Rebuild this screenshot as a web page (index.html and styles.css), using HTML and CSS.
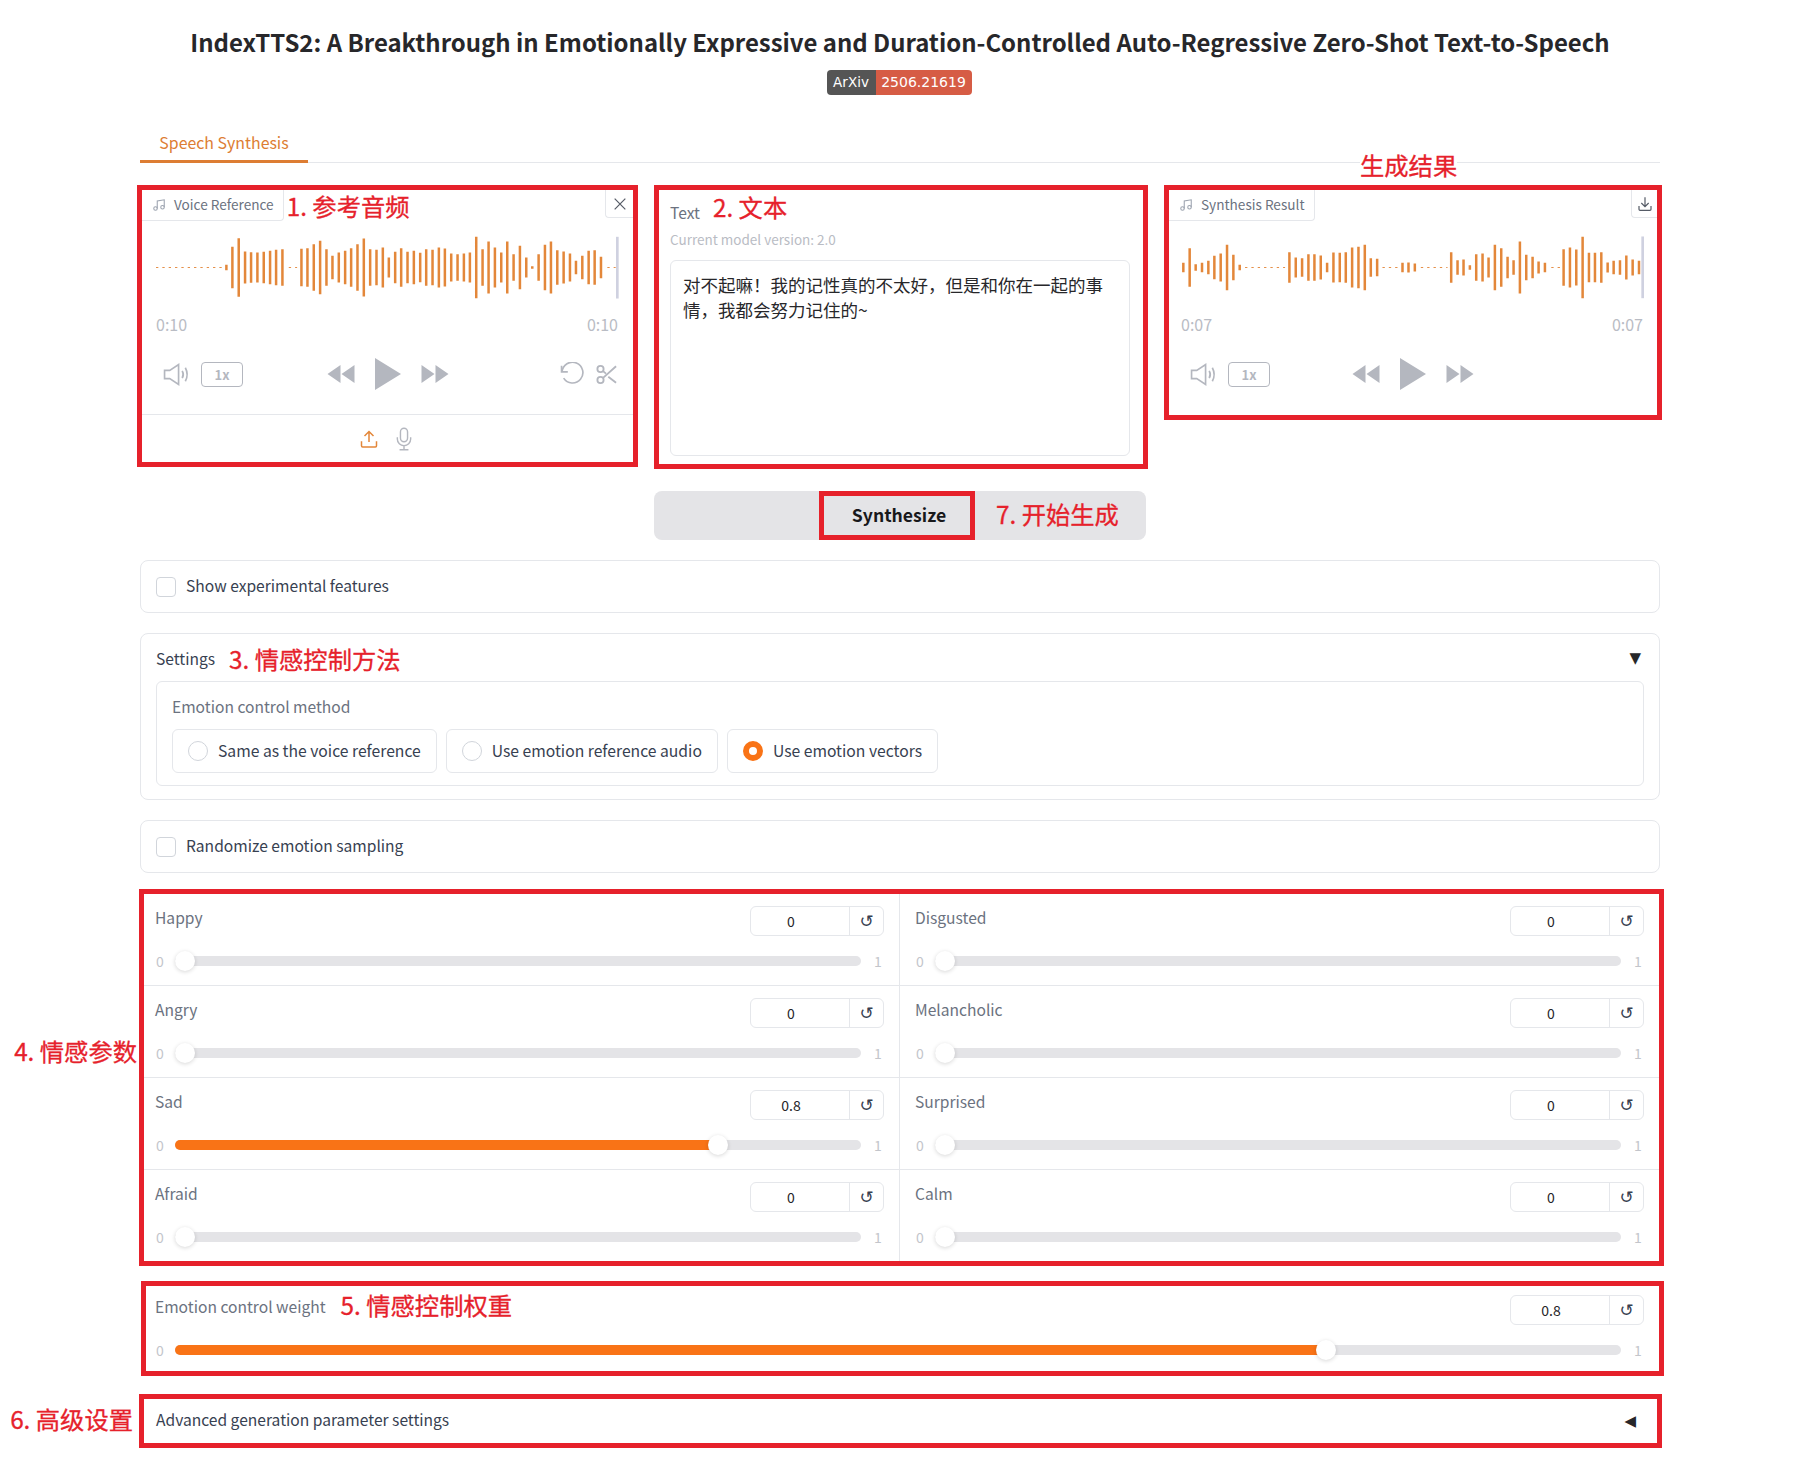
FILE: index.html
```html
<!DOCTYPE html>
<html lang="en">
<head>
    <meta charset="UTF-8">
    <meta name="viewport" content="width=device-width, initial-scale=1.0">
    <title>IndexTTS2</title>
    <link rel="stylesheet" href="styles.css">
</head>
<body>
    <div class="page">
        <h1 class="title">IndexTTS2: A Breakthrough in Emotionally Expressive and Duration-Controlled Auto-Regressive Zero-Shot Text-to-Speech</h1>
        <div class="badge-row">
            <div class="badge"><span class="badge-name">ArXiv</span><span class="badge-num">2506.21619</span></div>
        </div>

        <div class="tabs">
            <div class="tab">Speech Synthesis</div>
        </div>

        <div class="top-grid">
            <!-- voice reference -->
            <div class="red-box audio-box voice-box">
                <div class="audio-head">
                    <div class="audio-tag">
                        <svg class="note-icon" viewBox="0 0 24 24"><path d="M9 18V5l12-2v13"/><circle cx="6" cy="18" r="3"/><circle cx="18" cy="16" r="3"/></svg>
                        <span class="tag-text">Voice Reference</span>
                    </div>
                    <span class="note note-tag">1. 参考音频</span>
                    <div class="corner-btn">
                        <svg class="close-icon" viewBox="0 0 24 24"><path d="M4 4L20 20M20 4L4 20"/></svg>
                    </div>
                </div>
                <svg class="wave wave-ref" viewBox="77 700 1388 200">
                    <path class="wave-dots" d="M77 800H278M475 800H500M1430 800H1455"/>
                    <path class="wave-bars" d="M288 792V808M306 738V862M325 712V888M344 752V848M362 754V846M381 755V845M400 753V847M419 750V850M437 747V853M456 745V855M513 744V856M531 742V858M550 730V870M569 720V880M588 745V855M606 765V835M625 755V845M644 750V850M662 742V858M681 730V870M700 713V887M719 745V855M738 747V853M757 740V860M775 770V830M794 753V847M812 742V858M831 753V847M850 750V850M869 756V844M887 745V855M906 747V853M925 740V860M943 743V857M962 758V842M981 760V840M1000 758V842M1018 755V845M1037 708V892M1056 745V855M1074 722V878M1093 740V860M1112 755V845M1130 722V878M1149 760V840M1168 735V865M1187 770V830M1205 796V804M1224 760V840M1243 732V868M1261 722V878M1280 748V852M1299 752V848M1318 758V842M1336 780V820M1355 765V835M1374 750V850M1392 748V852M1411 768V832"/>
                    <path class="wave-cursor" d="M1460 708V893"/>
                </svg>
                <div class="times"><span>0:10</span><span>0:10</span></div>
                <div class="controls">
                    <div class="ctrl-left">
                        <svg class="vol-icon" viewBox="0 0 26 24"><path d="M1.5 8H6.5L15 2.5V21.5L6.5 16H1.5Z"/><path d="M18.5 8.5Q20.5 12 18.5 15.5M21.5 5.5Q25 12 21.5 18.5"/></svg>
                        <div class="speed">1x</div>
                    </div>
                    <div class="ctrl-mid">
                        <svg class="seek-icon" viewBox="0 0 27 20"><path d="M13 1V19L0 10ZM27 1V19L14 10Z"/></svg>
                        <svg class="play-icon" viewBox="0 0 26 32"><path d="M0 0L26 16L0 32Z"/></svg>
                        <svg class="seek-icon" viewBox="0 0 27 20"><path d="M0 1V19L13 10ZM14 1V19L27 10Z"/></svg>
                    </div>
                    <div class="ctrl-right">
                        <svg class="undo-icon" viewBox="0 0 24 24"><path d="M1.5 3.5V9.5H7.5"/><path d="M3.5 15.5A10 10 0 1 0 2 9.5"/></svg>
                        <svg class="cut-icon" viewBox="0 0 24 24"><circle cx="6" cy="6" r="3.4"/><circle cx="6" cy="18" r="3.4"/><path d="M23 3L8.5 16M14.5 14.5L23 21M8.5 8L12 11"/></svg>
                    </div>
                </div>
                <div class="source-bar">
                    <svg class="upload-icon" viewBox="0 0 24 24"><path d="M2 15V21A1.5 1.5 0 0 0 3.5 22.5H20.5A1.5 1.5 0 0 0 22 21V15"/><path d="M12 16V2M6 8L12 2L18 8"/></svg>
                    <svg class="mic-icon" viewBox="0 0 18 26"><rect x="5" y="1" width="8" height="15" rx="4"/><path d="M1.5 11V13A7.5 7.5 0 0 0 16.5 13V11M9 20.5V25M4 25H14"/></svg>
                </div>
            </div>

            <!-- text -->
            <div class="red-box text-box">
                <div class="text-head">
                    <span class="text-label">Text</span>
                    <span class="note note-up">2. 文本</span>
                </div>
                <div class="text-info">Current model version: 2.0</div>
                <div class="text-area">对不起嘛&#xFF01;我的记性真的不太好&#xFF0C;但是和你在一起的事情&#xFF0C;我都会努力记住的~</div>
            </div>

            <!-- result -->
            <div class="red-box audio-box result-box">
                <span class="note note-result">生成结果</span>
                <div class="audio-head">
                    <div class="audio-tag">
                        <svg class="note-icon" viewBox="0 0 24 24"><path d="M9 18V5l12-2v13"/><circle cx="6" cy="18" r="3"/><circle cx="18" cy="16" r="3"/></svg>
                        <span class="tag-text">Synthesis Result</span>
                    </div>
                    <div class="corner-btn corner-top">
                        <svg class="close-icon" viewBox="0 0 24 24"><path d="M21 15v5a1.5 1.5 0 0 1-1.5 1.5H4.500A1.500 1.500 0 0 1 3 20v-5"/><path d="M6.500 10.500L12 16L17.500 10.500M12 16V2"/></svg>
                    </div>
                </div>
                <svg class="wave wave-res" viewBox="96 311 1388 200">
                    <path class="wave-dots" d="M285 411H405M697 411H745M812 411H892M1203 411H1230"/>
                    <path class="wave-bars" d="M100 397V425M119 353V469M137 401V421M156 397V425M175 391V431M193 376V446M212 369V453M231 343V479M250 373V449M269 403V419M418 365V457M437 381V441M456 383V439M475 371V451M493 371V451M512 375V447M531 397V425M550 366V456M569 367V455M587 365V457M606 351V471M625 349V473M644 343V479M662 383V439M681 385V437M757 397V425M775 396V426M794 399V423M903 365V457M922 389V433M940 387V435M959 404V418M978 371V451M997 369V453M1015 381V441M1034 343V479M1053 353V469M1072 379V443M1090 389V433M1109 333V489M1128 373V449M1147 379V443M1165 393V429M1184 397V425M1240 356V466M1259 351V471M1278 357V465M1297 319V503M1316 367V455M1334 367V455M1353 365V457M1372 396V426M1390 391V431M1409 389V433M1428 375V447M1447 387V435M1466 391V431"/>
                    <path class="wave-cursor" d="M1477 318V503"/>
                </svg>
                <div class="times"><span>0:07</span><span>0:07</span></div>
                <div class="controls">
                    <div class="ctrl-left">
                        <svg class="vol-icon" viewBox="0 0 26 24"><path d="M1.5 8H6.5L15 2.5V21.5L6.5 16H1.5Z"/><path d="M18.5 8.5Q20.5 12 18.5 15.5M21.500 5.500Q25 12 21.500 18.500"/></svg>
                        <div class="speed">1x</div>
                    </div>
                    <div class="ctrl-mid">
                        <svg class="seek-icon" viewBox="0 0 27 20"><path d="M13 1V19L0 10ZM27 1V19L14 10Z"/></svg>
                        <svg class="play-icon" viewBox="0 0 26 32"><path d="M0 0L26 16L0 32Z"/></svg>
                        <svg class="seek-icon" viewBox="0 0 27 20"><path d="M0 1V19L13 10ZM14 1V19L27 10Z"/></svg>
                    </div>
                    <div class="ctrl-right"></div>
                </div>
            </div>

            <div class="synth-bar">
                <div class="synth-btn">Synthesize</div>
                <span class="note note-synth">7. 开始生成</span>
            </div>
        </div>

        <div class="card check-card">
            <span class="checkbox"></span>
            <span class="check-text">Show experimental features</span>
        </div>

        <div class="card settings-card">
            <div class="settings-head">
                <div class="settings-title">
                    <span>Settings</span>
                    <span class="note note-settings">3. 情感控制方法</span>
                </div>
                <span class="arrow">▼</span>
            </div>
            <div class="method-box">
                <div class="method-label">Emotion control method</div>
                <div class="method-options">
                    <div class="radio-opt"><span class="radio"></span><span class="radio-text">Same as the voice reference</span></div>
                    <div class="radio-opt"><span class="radio"></span><span class="radio-text">Use emotion reference audio</span></div>
                    <div class="radio-opt"><span class="radio radio-on"></span><span class="radio-text">Use emotion vectors</span></div>
                </div>
            </div>
        </div>

        <div class="card check-card">
            <span class="checkbox"></span>
            <span class="check-text">Randomize emotion sampling</span>
        </div>

        <!-- emotion vectors -->
        <div class="red-box emotion-box">
            <span class="note note-side">4. 情感参数</span>
            <div class="emotion-grid">
                <div class="slider-cell cell-left">
                    <div class="slider-top"><span class="slider-label">Happy</span><div class="num-box"><span class="num-value">0</span><span class="num-reset">↺</span></div></div>
                    <div class="slider-row"><span class="slider-min">0</span><div class="track"><span class="thumb"></span></div><span class="slider-max">1</span></div>
                </div>
                <div class="slider-cell cell-right">
                    <div class="slider-top"><span class="slider-label">Disgusted</span><div class="num-box"><span class="num-value">0</span><span class="num-reset">↺</span></div></div>
                    <div class="slider-row"><span class="slider-min">0</span><div class="track"><span class="thumb"></span></div><span class="slider-max">1</span></div>
                </div>
                <div class="slider-cell cell-left">
                    <div class="slider-top"><span class="slider-label">Angry</span><div class="num-box"><span class="num-value">0</span><span class="num-reset">↺</span></div></div>
                    <div class="slider-row"><span class="slider-min">0</span><div class="track"><span class="thumb"></span></div><span class="slider-max">1</span></div>
                </div>
                <div class="slider-cell cell-right">
                    <div class="slider-top"><span class="slider-label">Melancholic</span><div class="num-box"><span class="num-value">0</span><span class="num-reset">↺</span></div></div>
                    <div class="slider-row"><span class="slider-min">0</span><div class="track"><span class="thumb"></span></div><span class="slider-max">1</span></div>
                </div>
                <div class="slider-cell cell-left">
                    <div class="slider-top"><span class="slider-label">Sad</span><div class="num-box"><span class="num-value">0.8</span><span class="num-reset">↺</span></div></div>
                    <div class="slider-row"><span class="slider-min">0</span><div class="track"><span class="fill" style="width:79.2%"></span><span class="thumb" style="left:calc(79.2% - 10px)"></span></div><span class="slider-max">1</span></div>
                </div>
                <div class="slider-cell cell-right">
                    <div class="slider-top"><span class="slider-label">Surprised</span><div class="num-box"><span class="num-value">0</span><span class="num-reset">↺</span></div></div>
                    <div class="slider-row"><span class="slider-min">0</span><div class="track"><span class="thumb"></span></div><span class="slider-max">1</span></div>
                </div>
                <div class="slider-cell cell-left">
                    <div class="slider-top"><span class="slider-label">Afraid</span><div class="num-box"><span class="num-value">0</span><span class="num-reset">↺</span></div></div>
                    <div class="slider-row"><span class="slider-min">0</span><div class="track"><span class="thumb"></span></div><span class="slider-max">1</span></div>
                </div>
                <div class="slider-cell cell-right">
                    <div class="slider-top"><span class="slider-label">Calm</span><div class="num-box"><span class="num-value">0</span><span class="num-reset">↺</span></div></div>
                    <div class="slider-row"><span class="slider-min">0</span><div class="track"><span class="thumb"></span></div><span class="slider-max">1</span></div>
                </div>
            </div>
        </div>

        <div class="red-box weight-box">
            <div class="slider-top">
                <div class="weight-title">
                    <span class="slider-label">Emotion control weight</span>
                    <span class="note note-weight">5. 情感控制权重</span>
                </div>
                <div class="num-box"><span class="num-value">0.8</span><span class="num-reset">↺</span></div>
            </div>
            <div class="slider-row"><span class="slider-min">0</span><div class="track"><span class="fill" style="width:79.6%"></span><span class="thumb" style="left:calc(79.6% - 10px)"></span></div><span class="slider-max">1</span></div>
        </div>

        <div class="red-box advanced-box">
            <span class="note note-side note-side-low">6. 高级设置</span>
            <span class="advanced-text">Advanced generation parameter settings</span>
            <span class="arrow">◀</span>
        </div>
    </div>
</body>
</html>
```

FILE: styles.css
```css
body {
    margin: 0;
    background-color: #fff;
    color: #27272a;
    font-family: "Noto Sans CJK SC", "Noto Sans", sans-serif;
    font-size: 15.6px;
}

.page {
    width: 1520px;
    margin-left: 140px;
    padding-top: 25px;
}

.title {
    margin: 0;
    font-size: 23.95px;
    line-height: 33px;
    font-weight: 600;
    text-align: center;
    white-space: nowrap;
}

.badge-row {
    display: flex;
    justify-content: center;
    margin-top: 12px;
    padding-right: 2px;
}

.badge {
    display: flex;
    height: 25px;
    line-height: 25px;
    border-radius: 4px;
    overflow: hidden;
    color: #fff;
    font-family: "DejaVu Sans", sans-serif;
    font-size: 14px;
}

.badge-name {
    width: 49px;
    font-size: 13.5px;
    text-align: center;
    background-color: #555;
}

.badge-num {
    width: 96px;
    text-align: center;
    background-color: #d65c45;
}

.tabs {
    margin-top: 30px;
    height: 37px;
    border-bottom: 1px solid #e5e7eb;
}

.tab {
    width: 168px;
    height: 35px;
    font-size: 15.9px;
    line-height: 36px;
    text-align: center;
    color: #dd7d33;
    border-bottom: 3px solid #dd7d33;
}

.red-box {
    position: relative;
    box-sizing: border-box;
    border: 5px solid #e6212b;
    background-color: #fff;
}

.note {
    color: #e6212b;
    font-size: 24.3px;
    line-height: 30px;
    white-space: nowrap;
    -webkit-text-stroke: 0.3px #e6212b;
}

.top-grid {
    display: grid;
    grid-template-columns: 501px 494px 498px;
    column-gap: 16px;
    row-gap: 22px;
    align-items: start;
    margin-top: 22px;
    margin-left: -3px;
}

/* audio panels */
.voice-box {
    height: 282px;
}

.result-box {
    height: 235px;
}

.audio-head {
    display: flex;
    align-items: flex-start;
    height: 30px;
}

.audio-tag {
    display: flex;
    align-items: center;
    gap: 8px;
    height: 30px;
    padding: 0 9px 0 10px;
    border-right: 1px solid #e5e7eb;
    border-bottom: 1px solid #e5e7eb;
    border-bottom-right-radius: 4px;
    color: #6b7280;
    font-size: 13.6px;
}

.tag-text {
    margin-bottom: 2px;
}

.note-icon {
    width: 14px;
    height: 14px;
    fill: none;
    stroke: #9ca3af;
    stroke-width: 1.8;
}

.note-tag {
    margin-top: 1px;
    margin-left: 3px;
}

.corner-btn {
    display: flex;
    align-items: center;
    justify-content: center;
    width: 27px;
    height: 27px;
    margin-left: auto;
    border-left: 1px solid #e5e7eb;
    border-bottom: 1px solid #e5e7eb;
    border-bottom-left-radius: 4px;
}

.corner-top {
    width: 25px;
}

.close-icon {
    width: 16px;
    height: 16px;
    fill: none;
    stroke: #555b66;
    stroke-width: 1.8;
}

.wave {
    display: block;
    width: 463px;
    height: 67px;
    margin-top: 14px;
}

.wave-ref {
    margin-left: 14px;
}

.wave-res {
    margin-left: 13px;
}

.wave-dots {
    fill: none;
    stroke: #e5904a;
    stroke-width: 3;
    stroke-dasharray: 7 12;
}

.wave-bars {
    fill: none;
    stroke: #e3873a;
    stroke-width: 7.5;
}

.wave-cursor {
    fill: none;
    stroke: #cfd1e0;
    stroke-width: 8;
}

.times {
    display: flex;
    justify-content: space-between;
    margin: 12px 15px 0 14px;
    color: #b9bcc4;
    font-size: 16px;
    line-height: 22px;
}

.result-box .times {
    margin-left: 12px;
    margin-right: 14px;
}

.controls {
    display: grid;
    grid-template-columns: 1fr auto 1fr;
    align-items: center;
    height: 32px;
    margin-top: 23px;
    padding: 0 21px;
}

.ctrl-left {
    display: flex;
    align-items: center;
    gap: 11px;
}

.ctrl-mid {
    display: flex;
    align-items: center;
    gap: 20px;
}

.ctrl-right {
    display: flex;
    align-items: center;
    justify-content: flex-end;
    gap: 10px;
    margin-right: -5px;
}

.vol-icon {
    width: 27px;
    height: 25px;
    fill: none;
    stroke: #b4b7bf;
    stroke-width: 1.6;
}

.speed {
    box-sizing: border-box;
    width: 42px;
    height: 25px;
    line-height: 24px;
    text-align: center;
    border: 1px solid #b4b7bf;
    border-radius: 4px;
    color: #b4b7bf;
    font-size: 13px;
    font-weight: 700;
}

.seek-icon {
    width: 28px;
    height: 20px;
    fill: #b4b7bf;
}

.play-icon {
    width: 26px;
    height: 32px;
    fill: #b4b7bf;
}

.undo-icon {
    width: 25px;
    height: 25px;
    fill: none;
    stroke: #b4b7bf;
    stroke-width: 1.6;
}

.cut-icon {
    width: 22px;
    height: 23px;
    fill: none;
    stroke: #b4b7bf;
    stroke-width: 2;
}

.source-bar {
    display: flex;
    align-items: center;
    justify-content: center;
    gap: 18px;
    height: 47px;
    margin-top: 24px;
    padding-right: 3px;
    border-top: 1px solid #e5e7eb;
}

.upload-icon {
    width: 18px;
    height: 18px;
    fill: none;
    stroke: #e3873a;
    stroke-width: 2;
}

.mic-icon {
    width: 16px;
    height: 24px;
    fill: none;
    stroke: #b4b7bf;
    stroke-width: 1.6;
}

.note-result {
    position: absolute;
    top: -40px;
    left: 191px;
    background-color: #fff;
    line-height: 30px;
}

/* text panel */
.text-box {
    display: flex;
    flex-direction: column;
    height: 284px;
    padding: 8px 13px 8px 11px;
}

.text-head {
    display: flex;
    align-items: center;
    gap: 13px;
    height: 30px;
}

.text-label {
    margin-bottom: 2px;
    color: #6b7280;
}

.note-up {
    margin-bottom: 12px;
}

.text-info {
    margin-top: 1px;
    color: #b9bcc4;
    font-size: 13.5px;
    line-height: 20px;
}

.text-area {
    flex: 1;
    margin-top: 11px;
    padding: 11px 12px 9px;
    border: 1px solid #e5e7eb;
    border-radius: 6px;
    color: #27272a;
    font-size: 17.5px;
    line-height: 25px;
}

/* synthesize */
.synth-bar {
    grid-column: 2;
    display: flex;
    align-items: center;
    gap: 21px;
    box-sizing: border-box;
    width: 492px;
    height: 49px;
    padding-left: 165px;
    background-color: #e4e4e7;
    border-radius: 8px;
}

.synth-btn {
    box-sizing: border-box;
    width: 156px;
    height: 49px;
    padding-left: 4px;
    line-height: 37px;
    text-align: center;
    border: 5px solid #e6212b;
    color: #18181b;
    font-size: 17.6px;
    font-weight: 600;
}

.note-synth {
    margin-bottom: 4px;
}

/* cards */
.card {
    box-sizing: border-box;
    margin-top: 20px;
    border: 1px solid #e5e7eb;
    border-radius: 8px;
    background-color: #fff;
}

.check-card {
    display: flex;
    align-items: center;
    gap: 10px;
    height: 53px;
    padding: 0 15px;
    color: #374151;
}

.check-text {
    margin-bottom: 3px;
}

.checkbox {
    box-sizing: border-box;
    width: 20px;
    height: 20px;
    border: 1px solid #d1d5db;
    border-radius: 4px;
}

.settings-card {
    height: 167px;
    padding: 0 15px;
}

.settings-head {
    display: flex;
    align-items: center;
    justify-content: space-between;
    height: 47px;
    padding-right: 3px;
    color: #374151;
}

.settings-title {
    display: flex;
    align-items: center;
    gap: 14px;
}

.note-settings {
    margin-top: 2px;
}

.arrow {
    color: #27272a;
    font-family: "DejaVu Sans", sans-serif;
    font-size: 15px;
}

.method-box {
    box-sizing: border-box;
    height: 105px;
    padding: 12px 15px 0;
    border: 1px solid #e5e7eb;
    border-radius: 6px;
}

.method-label {
    color: #6b7280;
    line-height: 24px;
}

.method-options {
    display: flex;
    gap: 9px;
    margin-top: 11px;
}

.radio-opt {
    display: flex;
    align-items: center;
    gap: 10px;
    box-sizing: border-box;
    height: 44px;
    padding: 0 15px;
    border: 1px solid #e5e7eb;
    border-radius: 6px;
    color: #374151;
    font-size: 15.7px;
}

.radio-text {
    margin-bottom: 1px;
}

.radio {
    box-sizing: border-box;
    width: 20px;
    height: 20px;
    border: 1px solid #d1d5db;
    border-radius: 50%;
}

.radio-on {
    border: 6px solid #f97316;
}

/* sliders */
.emotion-box {
    width: 1525px;
    margin-top: 16px;
    margin-left: -1px;
}

.note-side {
    position: absolute;
    top: 142px;
    right: calc(100% + 7px);
}

.note-side-low {
    top: 5px;
    right: calc(100% + 11px);
}

.emotion-grid {
    display: grid;
    grid-template-columns: 756px 1fr;
}

.slider-cell {
    box-sizing: border-box;
    height: 92px;
    padding-top: 12px;
    border-bottom: 1px solid #e5e7eb;
}

.slider-cell:nth-last-child(-n+2) {
    height: 91px;
    border-bottom: none;
}

.cell-left {
    padding-left: 12px;
    padding-right: 15px;
    border-right: 1px solid #e5e7eb;
}

.cell-right {
    padding-left: 16px;
    padding-right: 15px;
}

.slider-top {
    display: flex;
    justify-content: space-between;
    align-items: flex-start;
}

.slider-label {
    margin-left: -1px;
    color: #6b7280;
    line-height: 22px;
}

.num-box {
    display: flex;
    box-sizing: border-box;
    width: 134px;
    height: 30px;
    border: 1px solid #e5e7eb;
    border-radius: 6px;
    font-size: 14px;
    line-height: 28px;
    text-align: center;
}

.num-value {
    flex: 1;
    padding-right: 18px;
    color: #27272a;
}

.num-reset {
    width: 33px;
    border-left: 1px solid #e5e7eb;
    color: #374151;
    font-family: "DejaVu Sans", sans-serif;
    font-size: 17px;
    line-height: 29px;
}

.slider-row {
    display: flex;
    align-items: center;
    gap: 11px;
    height: 20px;
    margin-top: 15px;
    padding-right: 2px;
    color: #c3c5cb;
    font-size: 14px;
}

.slider-min,
.slider-max {
    width: 8px;
}

.slider-max {
    margin-left: 2px;
}

.track {
    position: relative;
    flex: 1;
    height: 10px;
    border-radius: 5px;
    background-color: #e4e4e7;
}

.fill {
    display: block;
    height: 100%;
    border-radius: 5px;
    background-color: #f97316;
}

.thumb {
    position: absolute;
    top: -5px;
    left: 0;
    width: 20px;
    height: 20px;
    border-radius: 50%;
    background-color: #fff;
    box-shadow: 0 1px 4px rgba(0, 0, 0, 0.16);
}

.weight-box {
    width: 1523px;
    height: 95px;
    margin-top: 15px;
    margin-left: 1px;
    padding: 9px 15px 0 10px;
}

.weight-title {
    display: flex;
    align-items: flex-start;
    gap: 15px;
    height: 30px;
}

.note-weight {
    margin-top: -5px;
}

.advanced-box {
    display: flex;
    align-items: center;
    justify-content: space-between;
    width: 1523px;
    height: 54px;
    margin-top: 18px;
    margin-left: -1px;
    padding: 0 21px 0 12px;
    color: #374151;
}

.advanced-text {
    margin-bottom: 4px;
}
```
